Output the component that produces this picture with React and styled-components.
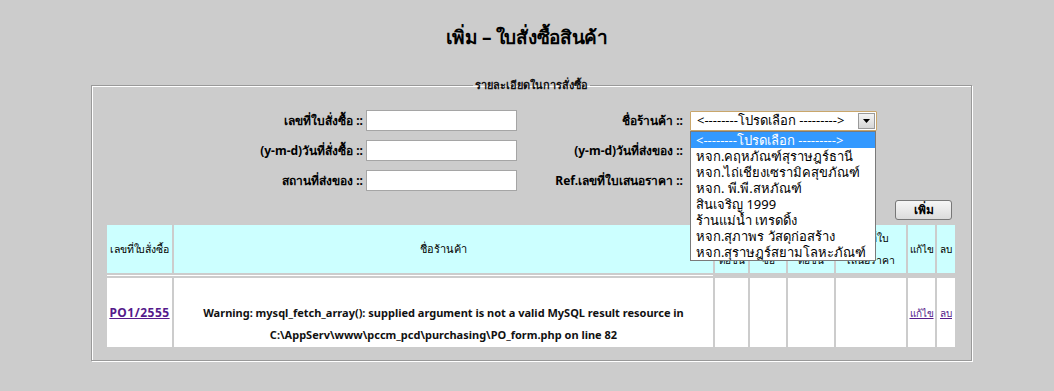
import React from "react";
import styled, { createGlobalStyle } from "styled-components";

const Global = createGlobalStyle`
  html, body { margin: 0; padding: 0; background: #cccccc; }
  body { font-family: "Noto Sans", "DejaVu Sans", sans-serif; color: #000; }
`;

const Page = styled.div`
  width: 1054px;
  height: 391px;
  overflow: hidden;
  background: #cccccc;
`;

const Title = styled.h1`
  margin: 0;
  padding-top: 24px;
  height: 78px;
  box-sizing: border-box;
  text-align: center;
  font-size: 19px;
  font-weight: bold;
  line-height: 26px;
  letter-spacing: -0.3px;
`;

const Fieldset = styled.fieldset`
  position: relative;
  margin: 0 82px 0 91px;
  padding: 18px 13px 11px 13px;
  border: 1px solid #999;
  box-shadow: inset 1px 1px 0 #fff, 1px 1px 0 #fff;
  min-width: 0;
`;

const Legend = styled.legend`
  margin: 0 auto;
  padding: 0 2px;
  font-size: 11px;
  line-height: 14px;
  font-weight: bold;
  color: #111;
`;

const FormGrid = styled.div`
  display: grid;
  grid-template-columns: 258px 151px 167px 187px;
  column-gap: 3px;
  row-gap: 9px;
  align-items: center;
`;

const Label = styled.label`
  text-align: right;
  font-size: 12px;
  font-weight: bold;
  white-space: nowrap;
  padding-right: ${(p) => (p.$wide ? "4px" : "0")};
`;

const TextInput = styled.input`
  box-sizing: border-box;
  width: 151px;
  height: 21px;
  border: 1px solid #a5a5a5;
  background: #fff;
  padding: 0 3px;
  font-size: 12px;
  margin: 0;
`;

const SelectWrap = styled.div`
  position: relative;
  width: 187px;
  height: 20px;
`;

const SelectBox = styled.div`
  box-sizing: border-box;
  width: 187px;
  height: 20px;
  border: 1px solid #c9a66b;
  border-radius: 1px;
  background: #fff;
  display: flex;
  align-items: center;
  font-size: 13px;
  padding-left: 6px;
  position: relative;
`;

const SelectArrow = styled.div`
  position: absolute;
  right: 1px;
  top: 1px;
  width: 17px;
  height: 16px;
  box-sizing: border-box;
  border: 1px solid #9a9a9a;
  background: linear-gradient(#f4f4f4, #d6d6d6);
  display: flex;
  align-items: center;
  justify-content: center;
`;

const DropList = styled.ul`
  position: absolute;
  left: 0;
  top: 20px;
  z-index: 10;
  box-sizing: border-box;
  width: 186px;
  margin: 0;
  padding: 0;
  list-style: none;
  background: #fff;
  border: 1px solid #7a7a7a;
`;

const DropItem = styled.li`
  height: 16.1px;
  line-height: 16px;
  font-size: 13px;
  padding-left: 5px;
  white-space: nowrap;
  overflow: hidden;
  background: ${(p) => (p.$active ? "#3399ff" : "#fff")};
  color: ${(p) => (p.$active ? "#fff" : "#000")};
`;

const ButtonRow = styled.div`
  display: flex;
  justify-content: flex-end;
  padding: 9px 6px 5px 0;
`;

const AddButton = styled.button`
  width: 57px;
  height: 20px;
  box-sizing: border-box;
  border: 1px solid #777;
  border-radius: 3px;
  background: linear-gradient(#f6f6f6, #dcdcdc);
  font-family: inherit;
  font-size: 12px;
  font-weight: bold;
  padding: 0;
  line-height: 16px;
`;

const Table = styled.table`
  width: 852px;
  border-spacing: 2px;
  table-layout: fixed;
  margin-left: 0;
  margin-top: -2px;
`;

const HeadCell = styled.th`
  background: #ccffff;
  height: 48px;
  padding: 0;
  font-size: ${(p) => p.$size || "11px"};
  letter-spacing: ${(p) => p.$track || "0"};
  font-weight: normal;
  line-height: 22px;
  text-align: center;
  vertical-align: middle;
  white-space: nowrap;
  overflow: hidden;
`;

const ThinCell = styled.td`
  background: #fff;
  height: 1px;
  padding: 0;
  line-height: 1px;
  font-size: 1px;
`;

const DataCell = styled.td`
  background: #fff;
  height: 69px;
  padding: 0;
  font-size: 11px;
  line-height: 22px;
  text-align: center;
  vertical-align: middle;
  white-space: nowrap;
`;

const Link = styled.a`
  color: #551a8b;
  text-decoration: underline;
  font-weight: ${(p) => (p.$bold ? "bold" : "normal")};
  font-size: ${(p) => p.$size || "11px"};
  letter-spacing: ${(p) => (p.$bold ? "0.5px" : "0")};
`;

const Warn = styled.div`
  font-size: 11px;
  line-height: 22px;
  font-weight: bold;
  color: #111;
`;

const options = [
  "<--------โปรดเลือก --------->",
  "หจก.คฤหภัณฑ์สุราษฎร์ธานี",
  "หจก.ไถ่เชียงเซรามิคสุขภัณฑ์",
  "หจก. พี.พี.สหภัณฑ์",
  "สินเจริญ 1999",
  "ร้านแม่น้ำ เทรดดิ้ง",
  "หจก.สุภาพร วัสดุก่อสร้าง",
  "หจก.สุราษฎร์สยามโลหะภัณฑ์",
];

const cols = [65, 539, 33, 36, 46, 70, 27, 18];

export default function App() {
  return (
    <Page>
      <Global />
      <Title>เพิ่ม – ใบสั่งซื้อสินค้า</Title>
      <Fieldset>
        <Legend>รายละเอียดในการสั่งซื้อ</Legend>
        <FormGrid>
          <Label>เลขที่ใบสั่งซื้อ ::</Label>
          <TextInput />
          <Label $wide>ชื่อร้านค้า ::</Label>
          <SelectWrap>
            <SelectBox>
              {options[0]}
              <SelectArrow>
                <svg width="7" height="4" viewBox="0 0 7 4">
                  <path d="M0 0h7L3.5 4z" fill="#000" />
                </svg>
              </SelectArrow>
            </SelectBox>
            <DropList>
              {options.map((o, i) => (
                <DropItem key={i} $active={i === 0}>
                  {o}
                </DropItem>
              ))}
            </DropList>
          </SelectWrap>

          <Label>(y-m-d)วันที่สั่งซื้อ ::</Label>
          <TextInput />
          <Label $wide>(y-m-d)วันที่ส่งของ ::</Label>
          <TextInput />

          <Label>สถานที่ส่งของ ::</Label>
          <TextInput />
          <Label $wide>Ref.เลขที่ใบเสนอราคา ::</Label>
          <TextInput />
        </FormGrid>

        <ButtonRow>
          <AddButton>เพิ่ม</AddButton>
        </ButtonRow>

        <Table>
          <colgroup>
            {cols.map((w, i) => (
              <col key={i} style={{ width: w }} />
            ))}
          </colgroup>
          <thead>
            <tr>
              <HeadCell $size="10.5px" $track="-0.2px">เลขที่ใบสั่งซื้อ</HeadCell>
              <HeadCell>ชื่อร้านค้า</HeadCell>
              <HeadCell $size="10px">ราคา<br />ต่อชิ้น</HeadCell>
              <HeadCell $size="10px">จำนวน<br />ซื้อ</HeadCell>
              <HeadCell $size="10px">ราคา<br />ต่อชิ้น</HeadCell>
              <HeadCell $size="10.5px">เลขที่ใบ<br />เสนอราคา</HeadCell>
              <HeadCell $size="10px">แก้ไข</HeadCell>
              <HeadCell $size="10px">ลบ</HeadCell>
            </tr>
          </thead>
          <tbody>
            <tr>
              <ThinCell colSpan={2} />
            </tr>
            <tr>
              <DataCell>
                <Link $bold $size="12px" href="#">PO1/2555</Link>
              </DataCell>
              <DataCell>
                <Warn>
                  <br />
                  Warning: mysql_fetch_array(): supplied argument is not a valid MySQL result resource in
                  <br />
                  C:\AppServ\www\pccm_pcd\purchasing\PO_form.php on line 82
                </Warn>
              </DataCell>
              <DataCell />
              <DataCell />
              <DataCell />
              <DataCell />
              <DataCell>
                <Link $size="10px" href="#">แก้ไข</Link>
              </DataCell>
              <DataCell>
                <Link $size="10px" href="#">ลบ</Link>
              </DataCell>
            </tr>
          </tbody>
        </Table>
      </Fieldset>
    </Page>
  );
}
